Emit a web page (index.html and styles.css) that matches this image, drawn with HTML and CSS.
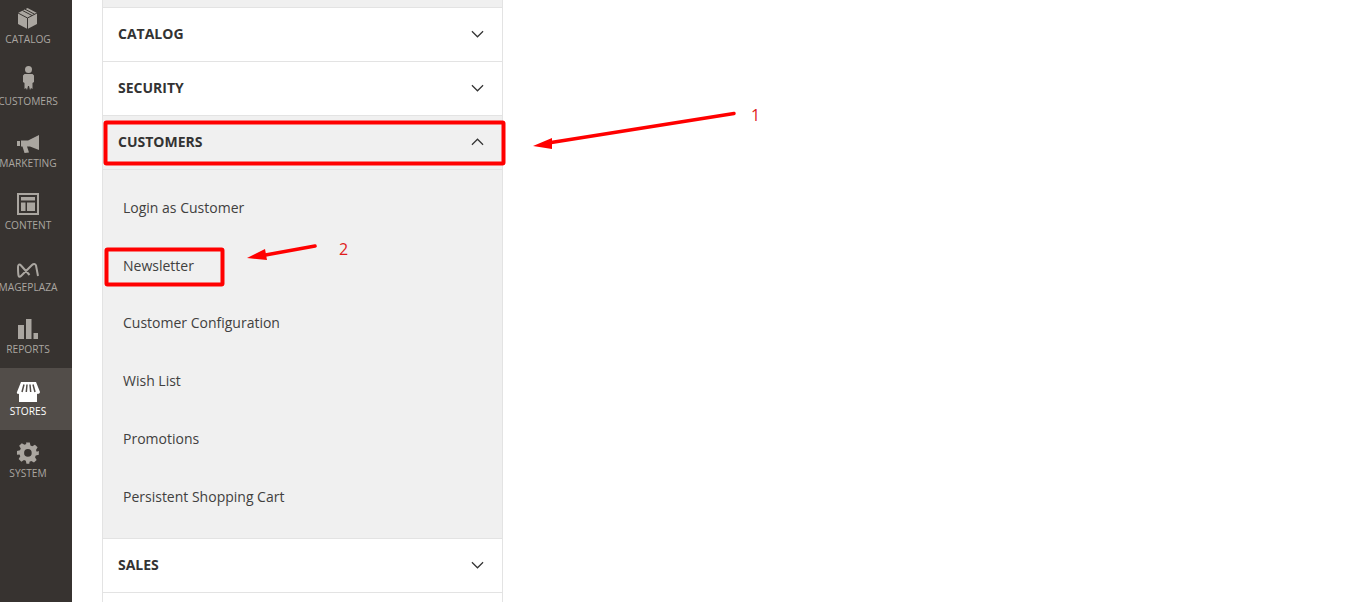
FILE: index.html
```html
<!DOCTYPE html>
<html lang="en">
<head>
<meta charset="utf-8">
<title>Stores Configuration</title>
<link rel="stylesheet" href="styles.css">
</head>
<body>
<div class="page">
  <nav class="side">
    <a class="nav-item"><svg class="ico" viewBox="0 0 24 24"><path d="M11.500 2 21 7v11l-9.500 5L2 18V7z"/><path class="cut" d="M2 7l9.500 5L21 7M11.500 12v11M6.500 4.500l9.500 5M9 3.200l9.500 5"/></svg><span>CATALOG</span></a>
    <a class="nav-item"><svg class="ico" viewBox="0 0 24 24"><circle cx="12.500" cy="1.500" r="3.500"/><path d="M8.500 6h8L18 7.500V14l-1.500 1v6l-1.500-1-1 2-1-4h-1l-1 4-1-2-1.500 1v-6L7 14V7.500z"/></svg><span>CUSTOMERS</span></a>
    <a class="nav-item"><svg class="ico" viewBox="0 0 24 24"><path d="M23 5v15l-9-3.500h-3l2 6-4.500.5-2-6.500H5V10.500h7zM1 11h3v5H1z"/></svg><span>MARKETING</span></a>
    <a class="nav-item"><svg class="ico" viewBox="0 0 24 24"><path fill-rule="evenodd" d="M1 1h22v22H1zM3 3v18h18V3zM5 5h14v3.500H5zM5 10.500h4.500V19H5zM11 10.500h8V19h-8z"/></svg><span>CONTENT</span></a>
    <a class="nav-item"><svg class="ico" viewBox="0 0 24 24"><path class="line" d="M13.500 21 5 11.500c-1.500-1.700-3-1-3 1.500 0 3 0 6 .5 8.500.3 1.500 1.500 1.500 2.500.5L16 11c1.500-1.500 3.500-1.500 4 .5L22 22"/></svg><span>MAGEPLAZA</span></a>
    <a class="nav-item"><svg class="ico" viewBox="0 0 24 24"><path d="M2 9h6v14H2zM10 3h5.500v20H10zM17.500 17H22v6h-4.500z"/></svg><span>REPORTS</span></a>
    <a class="nav-item active"><svg class="ico" viewBox="0 0 24 24"><path d="M5 4h15l4 10c0 2-3 2.500-3 1.500V24H3v-8.500C3 16.500 0 16 1 14z"/><path class="cut" d="M8 6.500 6 14M11 6.500 10.300 14M14 6.500 14.700 14M17 6.500 19 14"/></svg><span>STORES</span></a>
    <a class="nav-item"><svg class="ico" viewBox="0 0 24 24"><path transform="translate(.5 1.500) scale(.95)" fill-rule="evenodd" d="M10 1h4l.7 3.200 1.900.8 2.800-1.700 2.800 2.800-1.700 2.800.8 1.900L23.500 10v4l-3.200.7-.8 1.900 1.700 2.800-2.800 2.800-2.800-1.700-1.900.8L13.500 23.500h-3l-.7-3.200-1.900-.8-2.800 1.700-2.800-2.800 1.700-2.800-.8-1.900L.5 14v-4l3.200-.7.8-1.900-1.700-2.800 2.800-2.800 2.800 1.700 1.900-.8zM12 8a4 4 0 1 0 0 8 4 4 0 0 0 0-8z"/></svg><span>SYSTEM</span></a>
  </nav>
  <main class="main">
    <section class="panel">
      <div class="stub"></div>
      <div class="head"><span>CATALOG</span><svg class="chev" viewBox="0 0 14 8"><path d="M1 1l6 6 6-6"/></svg></div>
      <div class="head"><span>SECURITY</span><svg class="chev" viewBox="0 0 14 8"><path d="M1 1l6 6 6-6"/></svg></div>
      <div class="head open"><span>CUSTOMERS</span><svg class="chev" viewBox="0 0 14 8"><path d="M1 7l6-6 6 6"/></svg></div>
      <ul class="sub">
        <li>Login as Customer</li>
        <li>Newsletter</li>
        <li>Customer Configuration</li>
        <li>Wish List</li>
        <li>Promotions</li>
        <li>Persistent Shopping Cart</li>
      </ul>
      <div class="head"><span>SALES</span><svg class="chev" viewBox="0 0 14 8"><path d="M1 1l6 6 6-6"/></svg></div>
      <div class="tail"></div>
    </section>
  </main>
  <svg class="marks" viewBox="0 0 1354 602">
    <rect x="105.500" y="122.500" width="398" height="41" rx="1"/>
    <rect x="106.500" y="249.500" width="116" height="35" rx="1"/>
    <path class="shaft" d="M734 113.500 548 143"/>
    <path class="head-arrow" d="M533 146 552 138 552 149z"/>
    <path class="shaft" d="M315 246 260 256"/>
    <path class="head-arrow" d="M247 258 265 249 267 260z"/>
  </svg>
  <span class="note note-one">1</span>
  <span class="note note-two">2</span>
</div>
</body>
</html>
```

FILE: styles.css
```css
* { box-sizing: border-box; }
html, body { margin: 0; height: 100%; overflow: hidden; background: #fff; }
.page {
  position: relative;
  display: flex;
  width: 1354px;
  height: 602px;
  overflow: hidden;
  font-family: "Open Sans", sans-serif;
  color: #333;
}
.side {
  flex: none;
  width: 72px;
  height: 606px;
  margin-top: -4px;
  background: #373330;
  display: flex;
  flex-direction: column;
}
.nav-item {
  flex: none;
  height: 62px;
  display: flex;
  flex-direction: column;
  align-items: center;
  padding: 10px 16px 0 0;
  color: #aaa6a0;
  font-size: 10.200px;
  line-height: 14px;
  white-space: nowrap;
}
.ico { width: 24px; height: 24px; fill: #aaa6a0; display: block; flex: none; overflow: visible; margin-bottom: 2px; }
.cut { fill: none; stroke: #373330; stroke-width: 1; }
.line { fill: none; stroke: #aaa6a0; stroke-width: 2; }
.nav-item.active { background: #524d49; color: #fff; }
.active .ico { fill: #fff; }
.active .cut { stroke: #524d49; stroke-width: 1.500; }
.main { flex: 1; padding-left: 30px; }
.panel { width: 401px; border-left: 1px solid #e3e3e3; border-right: 1px solid #e3e3e3; }
.stub { height: 7px; background: #f0f0f0; }
.head {
  height: 54px;
  border-top: 1px solid #e3e3e3;
  display: flex;
  align-items: center;
  justify-content: space-between;
  padding: 0 18px 2px 15px;
  font-size: 14px;
  font-weight: 700;
  background: #fff;
}
.head.open { background: #f0f0f0; }
.chev { width: 13px; height: 8px; fill: none; stroke: #333; stroke-width: 1.300; }
.sub {
  list-style: none;
  margin: 0;
  padding: 8.800px 0 0;
  height: 369px;
  background: #f0f0f0;
  border-top: 1px solid #e3e3e3;
  font-size: 14px;
}
.sub li { height: 57.750px; line-height: 57.750px; padding-left: 20px; color: #41403e; }
.tail { height: 10px; border-top: 1px solid #e3e3e3; }
.marks { position: absolute; left: 0; top: 0; width: 1354px; height: 602px; pointer-events: none; }
.marks rect { fill: none; stroke: #f00; stroke-width: 4; }
.marks .shaft { fill: none; stroke: #f00; stroke-width: 3.500; stroke-linecap: round; }
.marks .head-arrow { fill: #f00; }
.note { position: absolute; color: #e01b1b; font-size: 16px; line-height: 20px; }
.note-one { left: 751px; top: 105px; }
.note-two { left: 339px; top: 239px; }
```
